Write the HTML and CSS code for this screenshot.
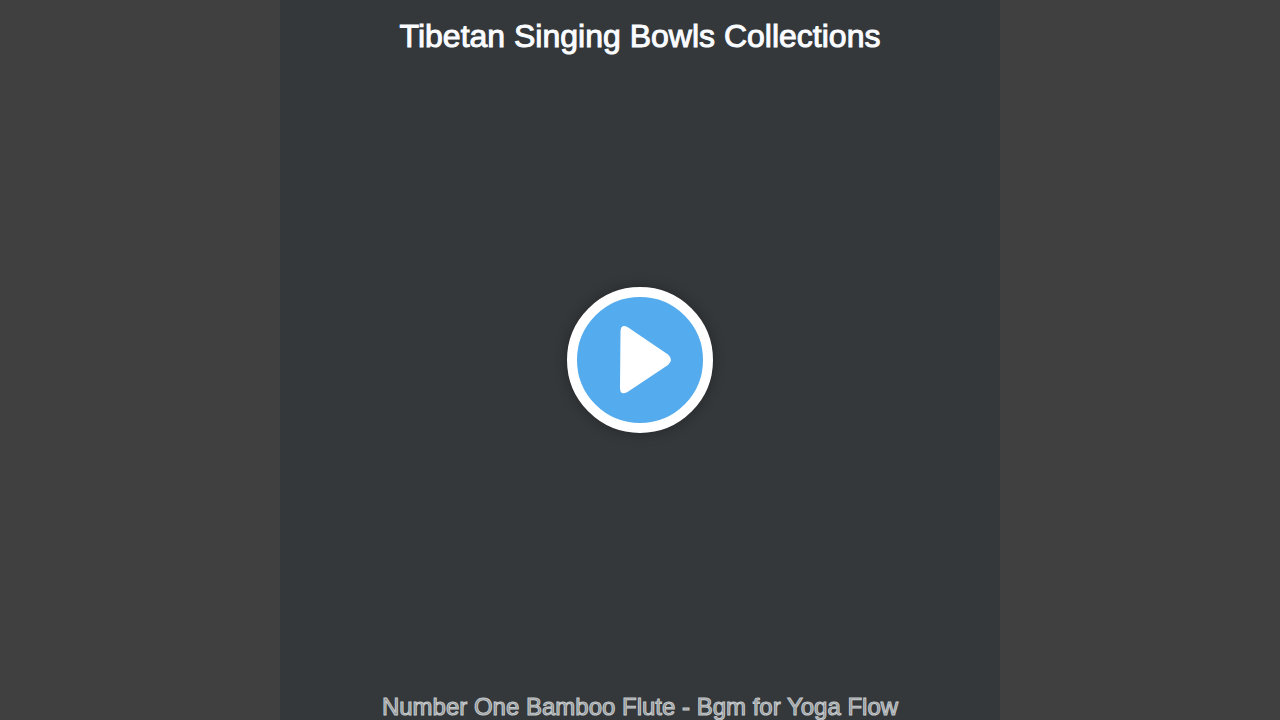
FILE: index.html
```html
<!DOCTYPE html>
<html lang="en">
<head>
    <meta charset="UTF-8">
    <meta name="viewport" content="width=device-width, initial-scale=1.0">
    <title>Tibetan Singing Bowls Collections</title>
    <link rel="stylesheet" href="styles.css">
</head>
<body>
    <main class="player">
        <h1 class="album">Tibetan Singing Bowls Collections</h1>
        <button class="play-button" type="button" aria-label="Play">
            <svg class="play-icon" viewBox="0 0 126 126" aria-hidden="true">
                <path d="M43.500 34 Q44 27 50.500 30 L91 57.500 Q97 63 91 68 L50.500 95 Q43 99 43 91 Z" fill="#fff"/>
            </svg>
        </button>
        <p class="track">Number One Bamboo Flute - Bgm for Yoga Flow</p>
    </main>
</body>
</html>
```
FILE: styles.css
```css
* {
    box-sizing: border-box;
}

body {
    margin: 0;
    background-color: #404040;
    font-family: "Liberation Sans", Arial, sans-serif;
}

.player {
    display: grid;
    grid-template-rows: 1fr auto 1fr;
    justify-items: center;
    width: 100vh;
    max-width: 100%;
    min-height: 100vh;
    margin: 0 auto;
    background-color: #34383b;
    text-align: center;
}

.album {
    margin: 0;
    padding-top: 18px;
    color: #fafcff;
    font-size: 32px;
    font-weight: normal;
    line-height: 36px;
    -webkit-text-stroke: 1px #fafcff;
}

.play-button {
    width: 146px;
    height: 146px;
    padding: 0;
    border: 10px solid #fff;
    border-radius: 50%;
    background-color: #54abee;
    box-shadow: 0 0 14px rgba(0, 0, 0, 0.3);
    cursor: pointer;
}

.play-icon {
    display: block;
    width: 100%;
}

.track {
    align-self: end;
    margin: 0;
    color: #8c9194;
    font-size: 24px;
    line-height: 26px;
    -webkit-text-stroke: 1px #c6cacc;
}
```
